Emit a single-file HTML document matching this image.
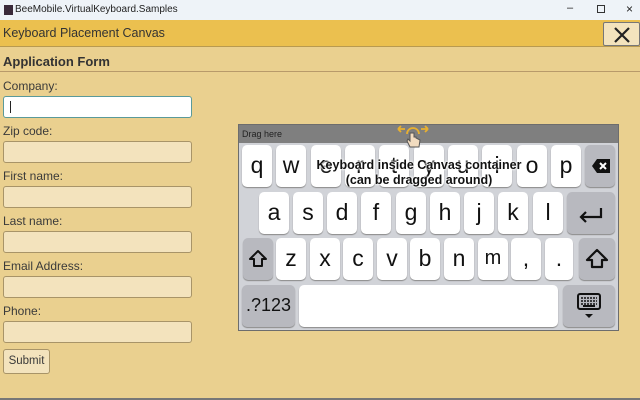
<!DOCTYPE html>
<html><head><meta charset="utf-8"><style>
*{margin:0;padding:0;box-sizing:border-box}
body{width:640px;height:400px;overflow:hidden;background:#ead08f;font-family:"Liberation Sans",sans-serif;position:relative;color:#3a3a3a}
.a{position:absolute}
.tb{left:0;top:0;width:640px;height:20px;background:#eef3f8;font-size:10px;color:#222}
.hd{left:0;top:20px;width:640px;height:27px;background:#ebc04f;border-bottom:1px solid #b89a50}
.lbl{left:3px;font-size:12px;color:#3a3a3a}
.in{left:3px;width:189px;height:22px;background:#f3e3bd;border:1px solid #a89468;border-radius:3px}
.kb{left:238px;top:124px;width:381px;height:207px;background:#d1d3d8;border:1px solid #6d6d6d}
.k{position:absolute;background:#fff;border-radius:5px;box-shadow:0 1px 1px #888;font-size:23px;color:#111;text-align:center;line-height:40px;height:42px}
.g{background:#b8b9bf}
</style></head><body>
<div class="a tb"><div class="a" style="left:4px;top:5px;width:9px;height:10px;background:#3a2a3a"></div><span class="a" style="left:15px;top:4px">BeeMobile.VirtualKeyboard.Samples</span>
<span class="a" style="left:567px;top:2px;font-size:11px">–</span>
<div class="a" style="left:597px;top:5px;width:8px;height:8px;border:1px solid #333"></div>
<span class="a" style="left:626px;top:2px;font-size:12px">×</span></div>
<div class="a hd"><span class="a" style="left:3px;top:6px;font-size:12.5px;color:#333">Keyboard Placement Canvas</span>
<div class="a" style="left:603px;top:2px;width:37px;height:24px;background:#f3e3bd;border:1px solid #777;border-radius:2px"><svg width="37" height="24" style="position:absolute;left:0;top:0"><path d="M11 5L25 19M25 5L11 19" stroke="#222" stroke-width="2.2"/></svg></div></div>
<div class="a" style="left:3px;top:54px;font-size:13px;font-weight:bold;color:#333">Application Form</div>
<div class="a" style="left:0;top:71px;width:640px;height:1px;background:#b89a6a"></div>
<div class="a lbl" style="top:79px">Company:</div>
<div class="a in" style="top:96px;background:#fff;border:1px solid #5a9a9a"><div class="a" style="left:6px;top:4px;width:1px;height:12px;background:#222"></div></div>
<div class="a lbl" style="top:124px">Zip code:</div><div class="a in" style="top:141px"></div>
<div class="a lbl" style="top:169px">First name:</div><div class="a in" style="top:186px"></div>
<div class="a lbl" style="top:214px">Last name:</div><div class="a in" style="top:231px"></div>
<div class="a lbl" style="top:259px">Email Address:</div><div class="a in" style="top:276px"></div>
<div class="a lbl" style="top:304px">Phone:</div><div class="a in" style="top:321px"></div>
<div class="a" style="left:3px;top:349px;width:47px;height:25px;background:#f3e3bd;border:1px solid #a89468;border-radius:3px;font-size:11.5px;line-height:23px;text-align:center">Submit</div>
<div class="a" style="left:0;top:398px;width:640px;height:2px;background:#777"></div>

<div class="a kb">
<div class="a" style="left:0;top:0;width:379px;height:18px;background:#7f7f7f;font-size:9px;color:#222;line-height:18px;padding-left:3px">Drag here</div>
<div style="position:absolute;left:0;top:0">
<div class="k" style="left:3px;top:20px;width:30px">q</div>
<div class="k" style="left:37px;top:20px;width:30px">w</div>
<div class="k" style="left:72px;top:20px;width:30px">e</div>
<div class="k" style="left:106px;top:20px;width:30px">r</div>
<div class="k" style="left:140px;top:20px;width:30px">t</div>
<div class="k" style="left:175px;top:20px;width:30px">y</div>
<div class="k" style="left:209px;top:20px;width:30px">u</div>
<div class="k" style="left:243px;top:20px;width:30px">i</div>
<div class="k" style="left:278px;top:20px;width:30px">o</div>
<div class="k" style="left:312px;top:20px;width:30px">p</div>
<div class="k g" style="left:346px;top:20px;width:30px"><svg width="30" height="42"><path d="M7 21L12 14H25V28H12Z" fill="#111"/><path d="M15 18L21 24M21 18L15 24" stroke="#fff" stroke-width="2"/></svg></div>
<div class="k" style="left:20px;top:67px;width:30px">a</div>
<div class="k" style="left:54px;top:67px;width:30px">s</div>
<div class="k" style="left:88px;top:67px;width:30px">d</div>
<div class="k" style="left:122px;top:67px;width:30px">f</div>
<div class="k" style="left:157px;top:67px;width:30px">g</div>
<div class="k" style="left:191px;top:67px;width:30px">h</div>
<div class="k" style="left:225px;top:67px;width:30px">j</div>
<div class="k" style="left:259px;top:67px;width:30px">k</div>
<div class="k" style="left:294px;top:67px;width:30px">l</div>
<div class="k g" style="left:328px;top:67px;width:48px"><svg width="48" height="42"><path d="M34 16V25H14M19 20L14 25L19 30" stroke="#111" stroke-width="2.2" fill="none"/></svg></div>
<div class="k g" style="left:4px;top:113px;width:30px"><svg width="30" height="42"><path d="M15 13L7 21H11V28H19V21H23Z" stroke="#111" stroke-width="2" fill="none" stroke-linejoin="round"/></svg></div>
<div class="k" style="left:37px;top:113px;width:30px">z</div>
<div class="k" style="left:71px;top:113px;width:30px">x</div>
<div class="k" style="left:104px;top:113px;width:30px">c</div>
<div class="k" style="left:138px;top:113px;width:30px">v</div>
<div class="k" style="left:171px;top:113px;width:30px">b</div>
<div class="k" style="left:205px;top:113px;width:30px">n</div>
<div class="k" style="left:239px;top:113px;width:30px;font-size:20px">m</div>
<div class="k" style="left:272px;top:113px;width:30px">,</div>
<div class="k" style="left:306px;top:113px;width:28px">.</div>
<div class="k g" style="left:340px;top:113px;width:36px"><svg width="36" height="42"><path d="M18 12L8 22H13V29H23V22H28Z" stroke="#111" stroke-width="2.2" fill="none" stroke-linejoin="round"/></svg></div>
<div class="k g" style="left:3px;top:160px;width:53px;font-size:18px">.?123</div>
<div class="k" style="left:60px;top:160px;width:259px"></div>
<div class="k g" style="left:324px;top:160px;width:52px"><svg width="52" height="42"><rect x="15" y="9" width="22" height="15" rx="2" fill="none" stroke="#111" stroke-width="2"/><path d="M18 13h16M18 16h16M18 19h16" stroke="#111" stroke-width="1.5" stroke-dasharray="2 1"/><path d="M20 21h12" stroke="#111" stroke-width="2"/><path d="M22 29h8l-4 4z" fill="#111"/></svg></div>
</div>
<div class="a" style="left:30px;top:33px;width:300px;text-align:center;font-size:12.5px;font-weight:bold;color:#111;line-height:15px;text-shadow:0 0 2px #fff,0 0 2px #fff,0 0 3px #fff">Keyboard inside Canvas container<br>(can be dragged around)</div>
<svg class="a" style="left:156px;top:-2px" width="36" height="26"><path d="M3 6H10M3 6L6 3M3 6L6 9M33 6H26M33 6L30 3M33 6L30 9M12 11A6 6 0 0 1 24 11" stroke="#e8b030" stroke-width="1.8" fill="none"/><path d="M15 10V18L13 16L12 18L15 24H24L25 17L21 15V14L19 14V10Z" fill="#f2dcc0" stroke="#555" stroke-width="1"/></svg>
</div>
</body></html>
